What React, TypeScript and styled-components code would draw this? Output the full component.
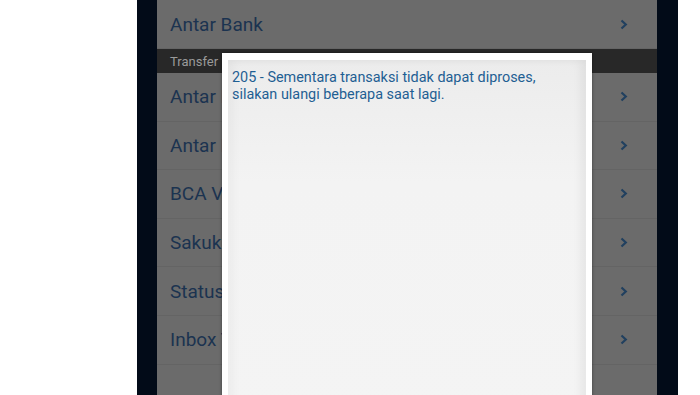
import styled, { createGlobalStyle } from "styled-components"

const Global = createGlobalStyle`
    html, body {
        margin: 0;
        padding: 0;
        height: 395px;
        overflow: hidden;
        background: #ffffff;
        font-family: Roboto, "Liberation Sans", sans-serif;
    }
`

const Page = styled.div`
    width: 700px;
    height: 395px;
    display: flex;
    background: #ffffff;
`

const Frame = styled.div`
    margin-left: 137px;
    width: 541px;
    height: 395px;
    background: #020b18;
    padding: 0 21px 0 20px;
    box-sizing: border-box;
`

const Screen = styled.div`
    position: relative;
    height: 100%;
    background: #6b6b6b;
    overflow: hidden;
`

const Row = styled.div<{ $h: number }>`
    height: ${p => p.$h}px;
    display: flex;
    align-items: center;
    justify-content: space-between;
    padding: 0 29px 0 13px;
    box-sizing: border-box;
    border-bottom: 1px solid #646464;
    color: #1b3350;
    font-size: 19px;
`

const Section = styled.div`
    height: 24px;
    display: flex;
    align-items: center;
    padding-left: 13px;
    background: #282828;
    color: #9a9a9a;
    font-size: 13px;
`

const Chevron = () => (
    <svg width="8" height="11" viewBox="0 0 8 11">
        <path d="M1.5 1.5 L5.8 5.5 L1.5 9.5" fill="none" stroke="#21405f" strokeWidth="2.2" />
    </svg>
)

const Dialog = styled.div`
    position: absolute;
    left: 65px;
    top: 53px;
    width: 370px;
    height: 360px;
    background: #ffffff;
    padding: 7px 6px 0 6px;
    box-sizing: border-box;
    box-shadow: 0 0 3px rgba(0, 0, 0, 0.4);
`

const DialogBody = styled.div`
    height: 100%;
    background: linear-gradient(180deg, #ececec 0%, #f3f3f3 35%, #f4f4f4 100%);
    box-shadow: inset -6px 0 8px rgba(0, 0, 0, 0.05), inset 6px 0 8px rgba(0, 0, 0, 0.03);
    padding: 9px 4px;
    box-sizing: border-box;
    color: #1f5f93;
    font-size: 14.4px;
    line-height: 17px;
`

export default function App(){
    const items:string[] = ["Antar Rekening","Antar Bank","BCA Virtual Account","Sakuku","Status Transfer","Inbox Transfer"]

    return(
        <Page>
            <Global/>
            <Frame>
                <Screen>
                    <Row $h={49}><span>Antar Bank</span><Chevron/></Row>
                    <Section>Transfer</Section>
                    {items.map((x,i)=><Row key={i} $h={48.6}><span>{x}</span><Chevron/></Row>)}
                    <Dialog>
                        <DialogBody>
                            205 - Sementara transaksi tidak dapat diproses,<br/>
                            silakan ulangi beberapa saat lagi.
                        </DialogBody>
                    </Dialog>
                </Screen>
            </Frame>
        </Page>
    )
}
